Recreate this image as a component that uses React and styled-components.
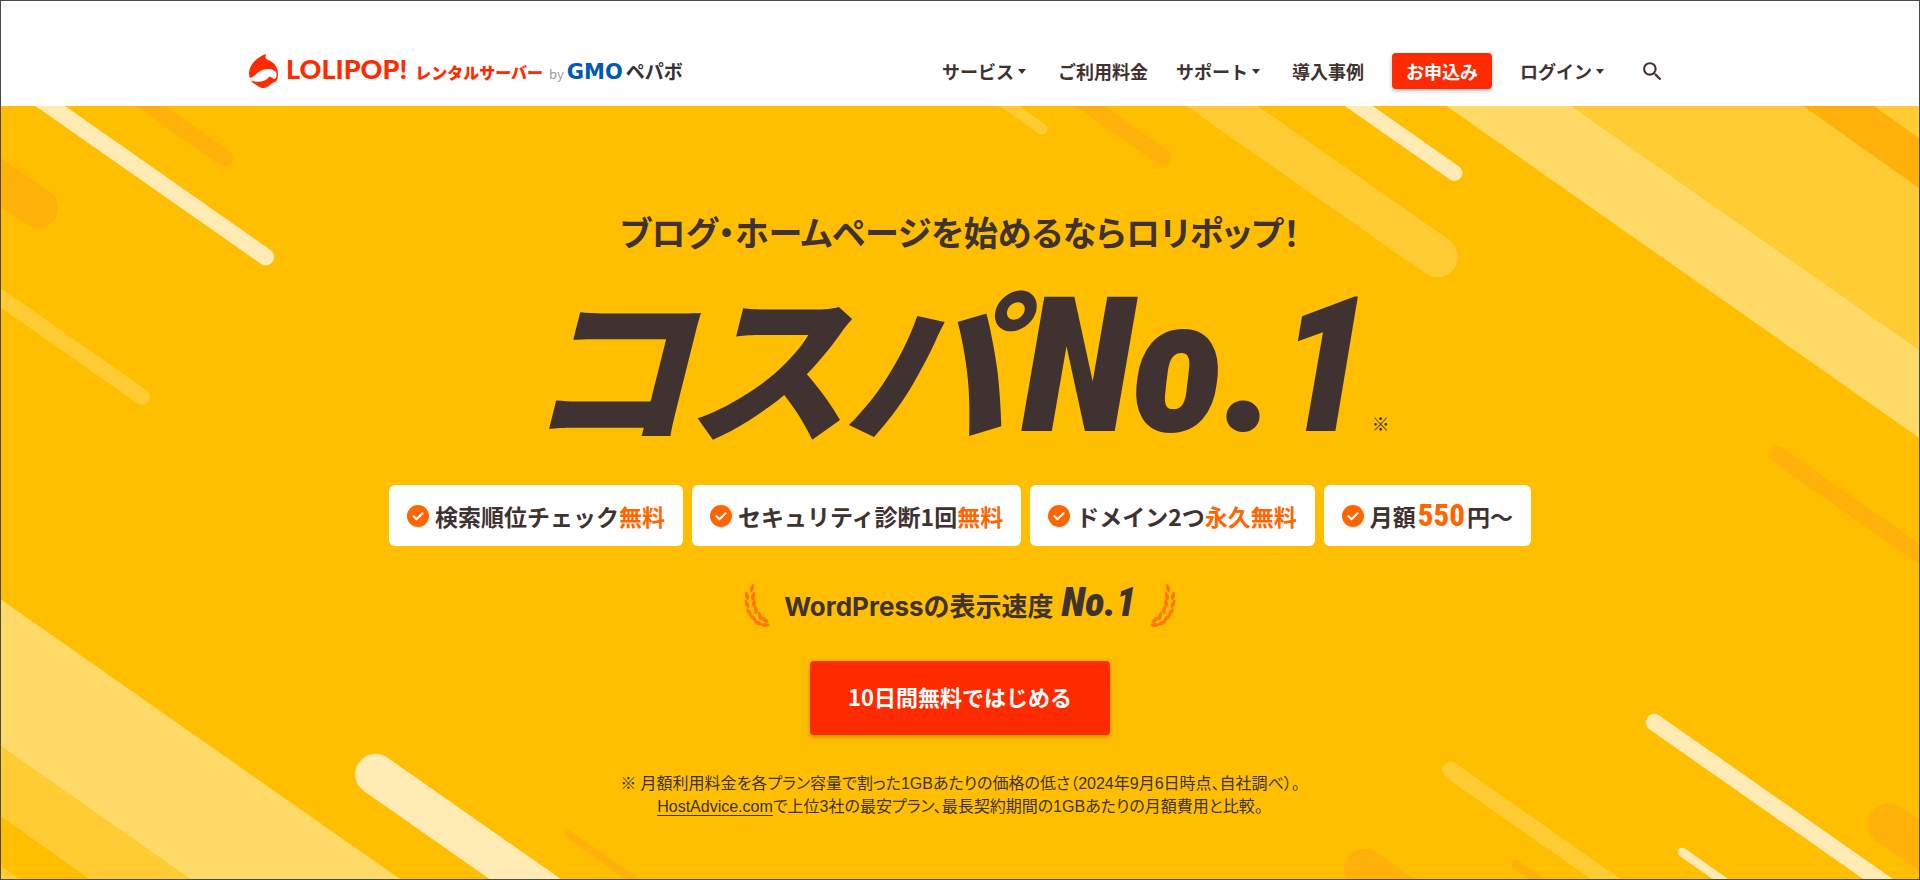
import React from "react";
import styled, { createGlobalStyle } from "styled-components";
import { MdSearch } from "react-icons/md";

const GlobalStyle = createGlobalStyle`
  * {
    box-sizing: border-box;
  }

  body {
    margin: 0;
    color: #403230;
    font-family: "Noto Sans CJK JP", sans-serif;
  }
`;

// Styled Components (CSS)
const Page = styled.div`
  display: flex;
  flex-direction: column;
  min-height: 100vh;
  border: 1px solid #4a4a4a;
  overflow: hidden;
`;

const Header = styled.header`
  display: flex;
  justify-content: center;
  padding: 35px 24px 0;
  height: 105px;
  background-color: #fff;
`;

const HeaderInner = styled.div`
  display: flex;
  justify-content: space-between;
  align-items: center;
  width: 100%;
  max-width: 1422px;
  height: 70px;
`;

const Logo = styled.a`
  display: flex;
  align-items: baseline;
  color: #ff2a00;
  text-decoration: none;
  white-space: nowrap;
  line-height: 36px;
`;

const LogoMark = styled.svg`
  align-self: center;
  width: 30px;
  height: 34px;
  margin-right: 7px;
`;

const LogoName = styled.span`
  font-family: Lato, sans-serif;
  font-weight: 900;
  font-size: 27px;
`;

const LogoService = styled.span`
  margin-left: 8px;
  font-weight: 900;
  font-size: 16px;
`;

const LogoBy = styled.span`
  margin: 0 3px 0 6px;
  color: #9a9ba5;
  font-size: 13px;
`;

const LogoGroup = styled.span`
  color: #0059b3;
  font-family: "DejaVu Sans", sans-serif;
  font-weight: 700;
  font-size: 21px;
`;

const LogoCompany = styled.span`
  margin-left: 3px;
  color: #333;
  font-weight: 700;
  font-size: 19px;
`;

const Nav = styled.nav`
  display: flex;
  align-items: center;
  gap: 28px;
`;

const NavLink = styled.a`
  color: #403230;
  font-weight: 700;
  font-size: 18px;
  line-height: 28px;
  text-decoration: none;
  white-space: nowrap;
`;

const NavButton = styled.button`
  display: flex;
  align-items: center;
  padding: 0 4px 0 0;
  border: none;
  background: none;
  color: #403230;
  font-family: inherit;
  font-weight: 700;
  font-size: 18px;
  line-height: 28px;
  white-space: nowrap;
  cursor: pointer;

  &::after {
    content: "";
    margin-left: 4px;
    border: 4px solid transparent;
    border-top: 5px solid #403230;
    border-bottom: none;
  }
`;

const ApplyLink = styled.a`
  padding: 0 14px;
  border-radius: 4px;
  background-color: #ff2a00;
  box-shadow: 0 2px 4px rgba(0, 0, 0, 0.25);
  color: #fff;
  font-weight: 700;
  font-size: 18px;
  line-height: 36px;
  text-decoration: none;
  white-space: nowrap;
`;

const SearchButton = styled.button`
  display: flex;
  padding: 8px 6px 8px 4px;
  border: none;
  background: none;
  color: #403230;
  font-size: 25px;
  cursor: pointer;
`;

const Hero = styled.main`
  position: relative;
  display: flex;
  flex: 1;
  flex-direction: column;
  align-items: center;
  padding: 104px 24px 24px;
  background-color: #ffbf00;
`;

const Stripes = styled.svg`
  position: absolute;
  top: 0;
  left: 0;
  width: 100%;
  height: 100%;
`;

const HeroContent = styled.div`
  position: relative;
  display: flex;
  flex-direction: column;
  align-items: center;
  width: 100%;
`;

const Lead = styled.p`
  margin: 0;
  font-weight: 700;
  font-size: 34px;
  line-height: 44px;
  font-feature-settings: "palt";
`;

const Catch = styled.h1`
  display: flex;
  align-items: baseline;
  margin: 12px 0 0;
  font-weight: 900;
  font-size: 164px;
  line-height: 188px;
  font-style: italic;
  font-feature-settings: "palt";
  white-space: nowrap;
`;

const CatchRank = styled.span`
  margin-left: 14px;
  font-family: "Roboto Condensed", sans-serif;
  font-size: 188px;
`;

const Mark = styled.small`
  font-weight: 400;
  font-size: 18px;
  line-height: 18px;
  font-style: normal;
`;

const Features = styled.ul`
  display: flex;
  flex-wrap: wrap;
  justify-content: center;
  gap: 9px;
  margin: 24px 0 0;
  padding: 0;
  list-style: none;
`;

const Feature = styled.li`
  display: flex;
  align-items: center;
  gap: 6px;
  height: 61px;
  padding: 0 18px;
  border-radius: 6px;
  background-color: #fff;
  font-weight: 700;
  font-size: 23px;
  white-space: nowrap;
`;

const CheckIcon = styled.svg`
  width: 22px;
  height: 22px;
`;

const Accent = styled.span`
  color: #ff6600;
`;

const Price = styled.span`
  margin: 0 2px;
  color: #ff6600;
  font-family: "Roboto Condensed", sans-serif;
  font-weight: 800;
  font-size: 31px;
`;

const Award = styled.p`
  display: flex;
  align-items: center;
  gap: 14px;
  margin: 35px 0 0;
  font-weight: 700;
  font-size: 26px;
  line-height: 44px;
`;

const AwardName = styled.span`
  font-family: Inter, sans-serif;
`;

const AwardRank = styled.span`
  margin-left: 8px;
  font-family: "Roboto Condensed", sans-serif;
  font-weight: 900;
  font-size: 40px;
  font-style: italic;
`;

const LaurelIcon = styled.svg`
  width: 26px;
  height: 44px;
  transform: ${(props) => (props.$flip ? "scaleX(-1)" : "none")};
`;

const StartButton = styled.button`
  width: 300px;
  height: 74px;
  margin-top: 32px;
  padding: 0 0 4px;
  border: none;
  border-radius: 4px;
  background-color: #ff2a00;
  box-shadow: 0 2px 5px rgba(0, 0, 0, 0.25);
  color: #fff;
  font-family: inherit;
  font-weight: 700;
  font-size: 22px;
  cursor: pointer;
`;

const Notes = styled.p`
  margin: 37px 0 0;
  font-family: "Liberation Sans", "Noto Sans CJK JP", sans-serif;
  font-size: 16px;
  line-height: 23px;
  text-align: center;
  font-feature-settings: "palt";
`;

const NoteLink = styled.a`
  color: inherit;
  text-underline-offset: 3px;
`;

const pale = "#ffda66";
const light = "#ffcc33";
const cream = "#ffebb3";
const orange = "#ffb10a";

// x, y is the round end of a stripe, dir says which way it runs off
const stripes = [
  { x: 265, y: 151, w: 17, dir: -1, color: cream },
  { x: 224, y: 52, w: 17, dir: -1, color: orange },
  { x: 37, y: 102, w: 40, dir: -1, color: orange },
  { x: 141, y: 291, w: 16, dir: -1, color: light },
  { x: 375, y: 669, w: 41, dir: 1, color: cream },
  { x: 568, y: 729, w: 8, dir: 1, color: orange },
  { x: 1042, y: 23, w: 11, dir: -1, color: light },
  { x: 1163, y: 51, w: 17, dir: -1, color: orange },
  { x: 1455, y: 67, w: 16, dir: -1, color: cream },
  { x: 1438, y: 151, w: 41, dir: -1, color: light },
  { x: 1778, y: 349, w: 17, dir: 1, color: orange },
  { x: 1655, y: 617, w: 17, dir: 1, color: cream },
  { x: 1683, y: 747, w: 9, dir: 1, color: cream },
  { x: 1890, y: 719, w: 42, dir: 1, color: orange },
  { x: 1451, y: 665, w: 17, dir: 1, color: light },
  { x: 1365, y: 764, w: 41, dir: 1, color: orange },
  { x: 1516, y: 759, w: 9, dir: 1, color: orange },
];

const leaves = [
  { x: 6, y: 5, r: 15 },
  { x: 1, y: 13, r: -15 },
  { x: 7, y: 13, r: 15 },
  { x: 1, y: 21, r: -25 },
  { x: 8, y: 20, r: 5 },
  { x: 3, y: 29, r: -35 },
  { x: 10, y: 27, r: -5 },
  { x: 7, y: 35, r: -50 },
  { x: 14, y: 33, r: -15 },
  { x: 12, y: 40, r: -70 },
  { x: 19, y: 37, r: -50 },
  { x: 19, y: 42, r: -88 },
];

const Check = () => (
  <CheckIcon viewBox="0 0 22 22" aria-hidden="true">
    <circle cx="11" cy="11" r="11" fill="#ff6600" />
    <path
      d="M6.5 11.2l3 3 6-6"
      fill="none"
      stroke="#fff"
      strokeWidth="2"
      strokeLinecap="round"
      strokeLinejoin="round"
    />
  </CheckIcon>
);

const Laurel = ({ flip }) => (
  <LaurelIcon $flip={flip} viewBox="-2 0 26 44" aria-hidden="true">
    {leaves.map((leaf) => (
      <path
        key={`${leaf.x}-${leaf.y}`}
        d="M0 -5Q3.8 0 0 5Q-3.8 0 0 -5Z"
        transform={`translate(${leaf.x} ${leaf.y}) rotate(${leaf.r})`}
        fill="#ff7300"
      />
    ))}
  </LaurelIcon>
);

const Background = () => (
  <Stripes viewBox="0 0 1920 774" preserveAspectRatio="xMidYMin slice" aria-hidden="true">
    <path d="M0 494L401 775H191L0 641Z" fill={pale} />
    <path d="M0 641L191 775H90L0 711Z" fill={light} />
    <path d="M0 761L20 775H0Z" fill={light} />
    <path d="M1447 0H1572L1920 244V332Z" fill={pale} />
    <path d="M1572 0H1920V244Z" fill={light} />
    <path d="M1804 0H1875L1920 32V82Z" fill={orange} />
    {stripes.map((stripe) => (
      <line
        key={`${stripe.x}-${stripe.y}`}
        x1={stripe.x}
        y1={stripe.y}
        x2={stripe.x + stripe.dir * 600}
        y2={stripe.y + stripe.dir * 420}
        stroke={stripe.color}
        strokeWidth={stripe.w}
        strokeLinecap="round"
      />
    ))}
  </Stripes>
);

const App = () => {
  return (
    <Page>
      <GlobalStyle />
      <Header>
        <HeaderInner>
          <Logo href="#">
            <LogoMark viewBox="0 0 30 34" aria-hidden="true">
              <path
                d="M17 0C16 3 16.500 4.500 18 5.500C25 8 29 13 29 20C29 24 28 27 26 28C22 29 19 34 14.500 34C10 34 7 30 4 29C2 27 0 24 0 20C0 11 8 3 17 0Z"
                fill="#ff2a00"
              />
              <path
                d="M0 23.500C4 25 8 18 13 16C19 14 25 14.500 27.500 19C28 22 27 24 25.500 25C23 25 22 22 20 23C16 28 8 29 2 26.500Z"
                fill="#fff"
              />
            </LogoMark>
            <LogoName>LOLIPOP!</LogoName>
            <LogoService>レンタルサーバー</LogoService>
            <LogoBy>by</LogoBy>
            <LogoGroup>GMO</LogoGroup>
            <LogoCompany>ペパボ</LogoCompany>
          </Logo>
          <Nav>
            <NavButton type="button">サービス</NavButton>
            <NavLink href="#">ご利用料金</NavLink>
            <NavButton type="button">サポート</NavButton>
            <NavLink href="#">導入事例</NavLink>
            <ApplyLink href="#">お申込み</ApplyLink>
            <NavButton type="button">ログイン</NavButton>
            <SearchButton type="button" aria-label="検索">
              <MdSearch />
            </SearchButton>
          </Nav>
        </HeaderInner>
      </Header>

      <Hero>
        <Background />
        <HeroContent>
          <Lead>ブログ・ホームページを始めるならロリポップ！</Lead>
          <Catch>
            コスパ<CatchRank>No.1</CatchRank>
            <Mark>※</Mark>
          </Catch>

          {/* Features */}
          <Features>
            <Feature>
              <Check />
              <span>
                検索順位チェック<Accent>無料</Accent>
              </span>
            </Feature>
            <Feature>
              <Check />
              <span>
                セキュリティ診断1回<Accent>無料</Accent>
              </span>
            </Feature>
            <Feature>
              <Check />
              <span>
                ドメイン2つ<Accent>永久無料</Accent>
              </span>
            </Feature>
            <Feature>
              <Check />
              <span>
                月額<Price>550</Price>円〜
              </span>
            </Feature>
          </Features>

          <Award>
            <Laurel />
            <span>
              <AwardName>WordPress</AwardName>の表示速度<AwardRank>No.1</AwardRank>
            </span>
            <Laurel flip />
          </Award>

          <StartButton type="button">10日間無料ではじめる</StartButton>

          <Notes>
            ※ 月額利用料金を各プラン容量で割った1GBあたりの価格の低さ（2024年9月6日時点、自社調べ）。
            <br />
            <NoteLink href="#">HostAdvice.com</NoteLink>
            で上位3社の最安プラン、最長契約期間の1GBあたりの月額費用と比較。
          </Notes>
        </HeroContent>
      </Hero>
    </Page>
  );
};

export default App;
